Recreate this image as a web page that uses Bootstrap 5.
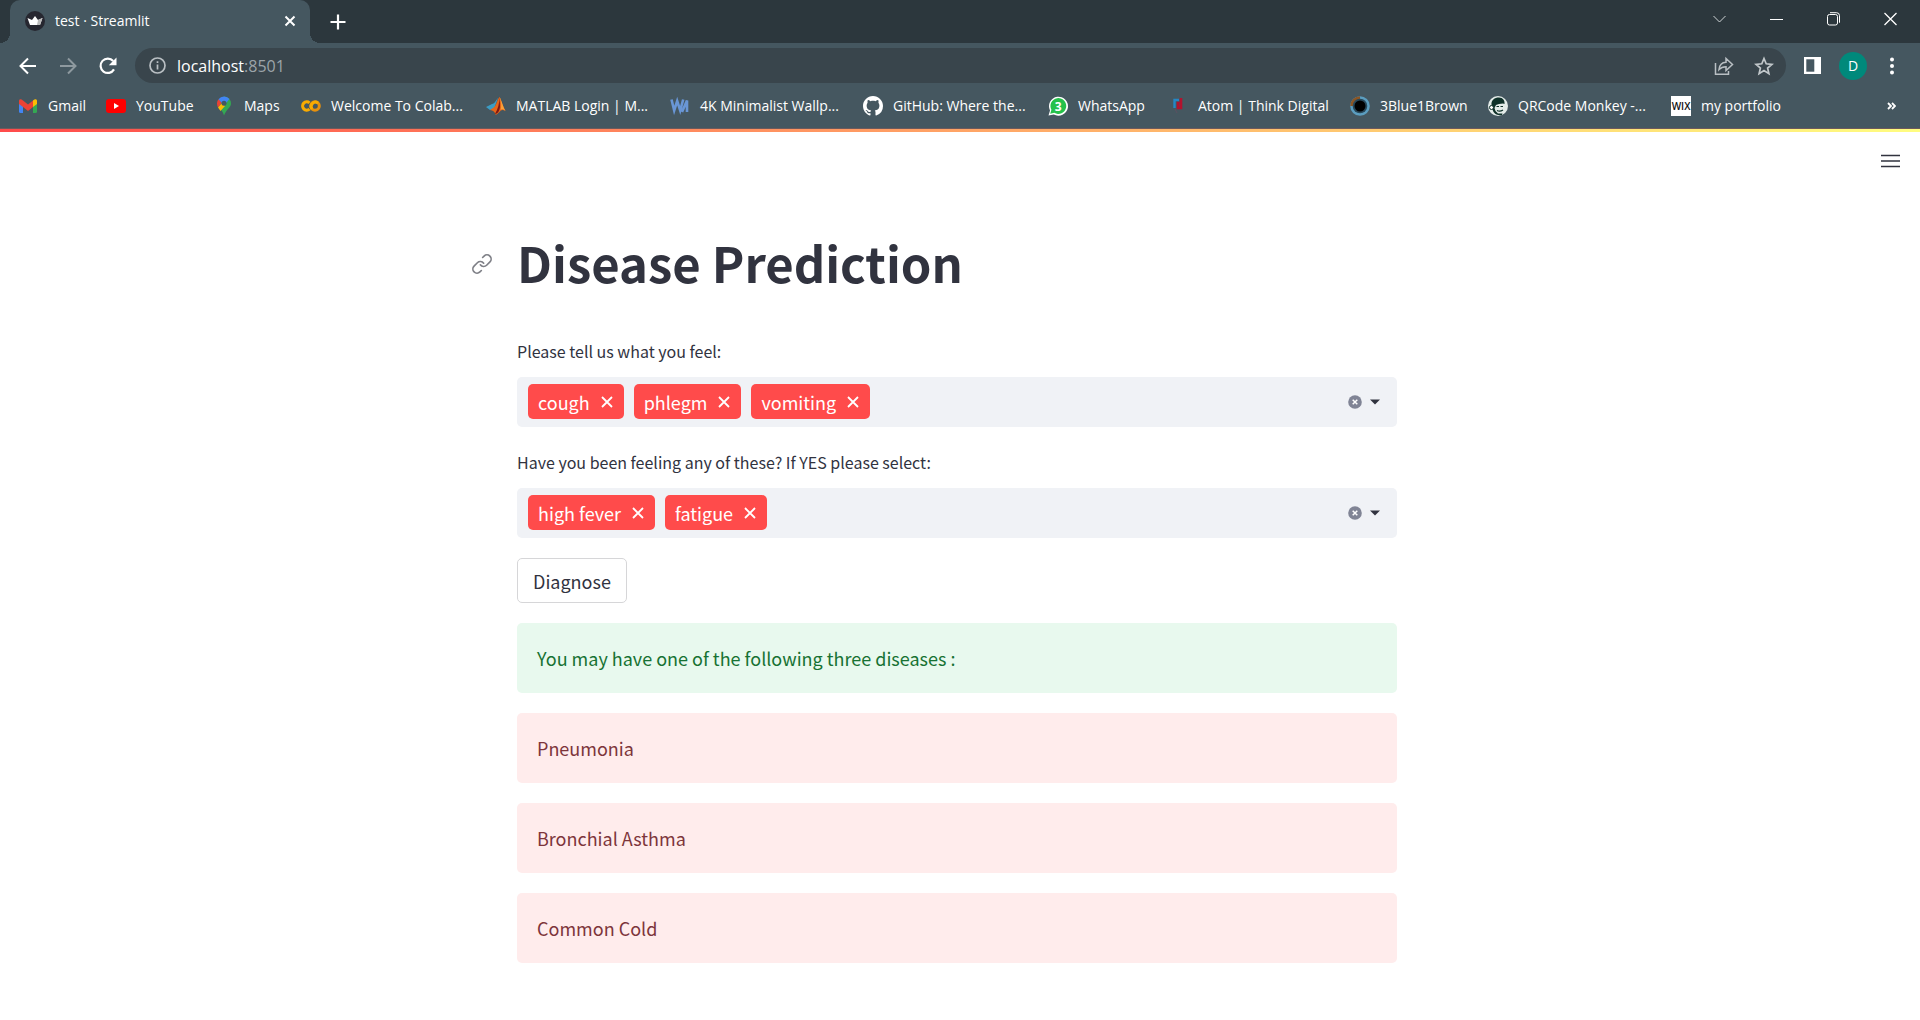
<!DOCTYPE html>
<html lang="en">
<head>
<meta charset="utf-8">
<meta name="viewport" content="width=device-width, initial-scale=1">
<title>test · Streamlit</title>
<link href="https://cdn.jsdelivr.net/npm/bootstrap@5.3.0/dist/css/bootstrap.min.css" rel="stylesheet">
<style>
  :root { --strip:#2c373d; --bar:#455760; --omni:#39454c; --ink:#31333f; }
  body { font-family:"Noto Sans CJK JP","Source Sans Pro",sans-serif; font-size:18px; line-height:30px; color:var(--ink); background:#fff; }
  button { font:inherit; color:inherit; background:none; border:0; padding:0; }
  svg { display:block; flex:none; }
  .chrome-ui { font-family:"Open Sans","Segoe UI",sans-serif; font-size:14px; line-height:20px; color:#fff; background:var(--bar); }
  .tab-strip { height:43px; background:var(--strip); padding-left:10px; }
  .browser-tab { width:300px; height:43px; background:var(--bar); border-radius:10px 10px 0 0; padding:0 14px 2px 15px; gap:10px; }
  .browser-tab::before, .browser-tab::after { content:""; position:absolute; bottom:0; width:10px; height:10px; }
  .browser-tab::before { left:-10px; background:radial-gradient(circle at 0 0, transparent 10px, var(--bar) 10px); }
  .browser-tab::after { right:-10px; background:radial-gradient(circle at 100% 0, transparent 10px, var(--bar) 10px); }
  .new-tab { margin-left:20px; }
  .win-controls { gap:42px; padding-right:22px; padding-bottom:6px; }
  .tool-row { height:45px; padding:0 24px 0 18px; }
  .nav-buttons { gap:20px; margin-right:17px; }
  .omnibox { height:35px; border-radius:18px; background:var(--omni); padding:0 12px 0 14px; }
  .omnibox a { font-size:16px; color:#fff; margin-left:11px; }
  .omnibox a span { color:#9ca4a9; }
  .tool-right { gap:17px; margin-left:17px; }
  .avatar { width:28px; height:28px; background:#00897b; }
  .bookmark-row { height:40px; padding:0 24px 4px 18px; }
  .bookmark-grid { grid-template-columns:88px 108px 87px 185px 184px 193px 185px 120px 182px 138px 183px auto; }
  .bookmark-grid a { gap:10px; color:#fff; }
  .accent-line { height:4px; border-top:1px solid #6d5a5c; background:linear-gradient(90deg,#ff4b4b,#fffd80); }
  .menu-row { height:54px; padding:3px 20px 0 0; }
  .app-col { max-width:880px; width:100%; }
  .app-main { padding-right:6px; }
  .app-title { font-size:49px; line-height:66px; font-weight:700; margin:43px 0 44px; }
  .title-anchor { left:-45px; top:25px; }
  .field-label { font-size:16px; line-height:24px; margin-bottom:14px; display:block; }
  .multi-box { background:#f0f2f6; border-radius:5px; padding:7px 16px 8px 11px; gap:10px; margin-bottom:23px; }
  .multi-box input { background:transparent; border:0; outline:0; min-width:0; }
  .box-tools { gap:7px; }
  .chip { background:#ff4b4b; color:#fff; height:35px; border-radius:5px; padding:0 11px 0 10px; gap:11px; }
  .diagnose { border:1px solid #d6d6d8; border-radius:5px; height:45px; padding:0 15px; background:#fff; }
  .result { border-radius:5px; padding:20px; margin:20px 0 0; border:0; }
  .result-ok { background:#e8f9ee; color:#177233; }
  .result-bad { background:#ffecec; color:#7d353b; }
</style>
<script src="https://cdn.jsdelivr.net/npm/bootstrap@5.3.0/dist/js/bootstrap.bundle.min.js"></script>
</head>
<body>
<header class="chrome-ui">
  <div class="tab-strip d-flex align-items-center">
    <div class="browser-tab position-relative d-flex align-items-center">
      <svg width="20" height="20" viewBox="0 0 20 20"><circle cx="10" cy="10" r="10" fill="#262730"/><path d="M2.500 7l4.500 2 3-4 3 4 4.500-2-2.500 7H5z" fill="#fff"/><path d="M13 9l4.500-2-2.500 7h-3z" fill="#bbb"/></svg>
      <span class="me-auto">test · Streamlit</span>
      <button aria-label="Close tab"><svg width="12" height="12" viewBox="0 0 12 12" stroke="#fff" stroke-width="2"><path d="M1.500 1.500l9 9M10.500 1.500l-9 9"/></svg></button>
    </div>
    <button class="new-tab" aria-label="New tab"><svg width="16" height="16" viewBox="0 0 16 16" stroke="#fff" stroke-width="2.200"><path d="M8 .5v15M.5 8h15"/></svg></button>
    <div class="win-controls d-flex align-items-center ms-auto">
      <button aria-label="Search tabs"><svg width="15" height="14" viewBox="0 0 15 14" fill="none" stroke="#cfd4d6"><path d="M1.500 4l6 6 6-6"/></svg></button>
      <button aria-label="Minimize"><svg width="15" height="14" viewBox="0 0 15 14" stroke="#fff"><path d="M1 7.500h13"/></svg></button>
      <button aria-label="Restore"><svg width="15" height="14" viewBox="0 0 15 14" fill="none" stroke="#fff"><rect x="1.500" y="2.500" width="10" height="10.500" rx="2"/><path d="M4 .7h6.500a3 3 0 0 1 3 3v7"/></svg></button>
      <button aria-label="Close"><svg width="15" height="14" viewBox="0 0 15 14" stroke="#fff" stroke-width="1.300"><path d="M1.500 1l12 12M13.500 1l-12 12"/></svg></button>
    </div>
  </div>
  <div class="tool-row d-flex align-items-center">
    <div class="nav-buttons d-flex align-items-center">
      <button aria-label="Back"><svg width="20" height="20" viewBox="0 0 20 20" fill="none" stroke="#fff" stroke-width="2"><path d="M18 10H3M10 2.500L2.500 10l7.500 7.500"/></svg></button>
      <button aria-label="Forward"><svg width="20" height="20" viewBox="0 0 20 20" fill="none" stroke="#8e999f" stroke-width="2"><path d="M2 10h15M10 2.500l7.500 7.500-7.500 7.500"/></svg></button>
      <button aria-label="Reload"><svg width="20" height="20" viewBox="0 0 20 20"><path d="M16 13.400A7.200 7.200 0 1 1 15.200 5" fill="none" stroke="#fff" stroke-width="2.200"/><path d="M18.500 1.500v7.700h-7.700z" fill="#fff"/></svg></button>
    </div>
    <div class="omnibox d-flex align-items-center flex-grow-1">
      <svg width="17" height="17" viewBox="0 0 17 17" fill="none" stroke="#b9bfc3" stroke-width="1.700"><circle cx="8.500" cy="8.500" r="7.500"/><path d="M8.500 7.500v5M8.500 4.300v1.800"/></svg>
      <a href="#" class="text-decoration-none me-auto">localhost<span>:8501</span></a>
      <button class="me-3 pe-1" aria-label="Share"><svg width="20" height="20" viewBox="0 0 20 20" fill="none" stroke="#b9bfc3" stroke-width="1.500"><path d="M1.500 7v11.200h13V15M5 13.500c.5-5 3-7 7-7.200V2.500l6.500 6-6.500 6v-3.800c-3 0-5 .6-7 2.800z"/></svg></button>
      <button aria-label="Bookmark this page"><svg width="20" height="20" viewBox="0 0 20 20" fill="none" stroke="#c2c8cb" stroke-width="1.700"><path d="M10 2.500l2.200 5.300 5.700.5-4.300 3.700 1.300 5.600-4.900-3-4.900 3L6.400 12 2.100 8.300l5.700-.5z"/></svg></button>
    </div>
    <div class="tool-right d-flex align-items-center">
      <button aria-label="Side panel"><svg width="19" height="19" viewBox="0 0 19 19"><path d="M1 1h17v17H1z" fill="#fff"/><path d="M3.300 3.300h8v12.400h-8z" fill="#455760"/></svg></button>
      <button class="avatar rounded-circle">D</button>
      <button class="ps-1" aria-label="Browser menu"><svg width="8" height="18" viewBox="0 0 8 18" fill="#fff"><circle cx="4" cy="2.500" r="2"/><circle cx="4" cy="9" r="2"/><circle cx="4" cy="15.500" r="2"/></svg></button>
    </div>
  </div>
  <nav class="bookmark-row d-flex align-items-center" aria-label="Bookmarks">
    <div class="bookmark-grid d-grid text-nowrap">
      <a href="#" class="d-flex align-items-center text-decoration-none"><svg width="20" height="20" viewBox="0 0 20 20"><path d="M1 6h4v11H2.500A1.500 1.500 0 0 1 1 15.500z" fill="#4285f4"/><path d="M15 6h4v9.500a1.500 1.500 0 0 1-1.500 1.500H15z" fill="#34a853"/><path d="M15 4.500c2-2 4-1.500 4 .5v3l-4 3z" fill="#fbbc04"/><path d="M5 4.500l5 4 5-4V11l-5 4-5-4-4-3V5c0-2 2-2.500 4-.5z" fill="#ea4335"/></svg>Gmail</a>
      <a href="#" class="d-flex align-items-center text-decoration-none"><svg width="20" height="20" viewBox="0 0 20 20"><rect y="3" width="20" height="14" rx="3" fill="#f00"/><path d="M8 7l5 3-5 3z" fill="#fff"/></svg>YouTube</a>
      <a href="#" class="d-flex align-items-center text-decoration-none"><svg width="20" height="20" viewBox="0 0 20 20"><path d="M10 .5a7 7 0 0 1 7 7c0 4-5 6-7 12-1-4-3-5.500-5-8z" fill="#34a853"/><path d="M4.500 3.200L8 6.500l-4 5C2.500 8.500 2.700 5 4.500 3.200z" fill="#ea4335"/><path d="M4.500 3.200A7 7 0 0 1 15.500 3L10 9.500z" fill="#4285f4"/><path d="M4 11.500l4-4.500 3 3-4.500 5z" fill="#fbbc04"/><circle cx="10" cy="7.300" r="2.500" fill="#455760"/></svg>Maps</a>
      <a href="#" class="d-flex align-items-center text-decoration-none"><svg width="20" height="20" viewBox="0 0 20 20" fill="none" stroke-width="3"><path d="M8.500 6.800a4.200 4.200 0 1 0 0 6.400" stroke="#f9ab00"/><circle cx="14" cy="10" r="4.300" stroke="#e8910c"/><path d="M17 7a4.300 4.300 0 0 0-6 6" stroke="#f9ab00"/></svg>Welcome To Colab...</a>
      <a href="#" class="d-flex align-items-center text-decoration-none"><svg width="20" height="20" viewBox="0 0 20 20"><path d="M0 11l6-3c3-.5 4-4 6-6l-4 11-4 1z" fill="#3c9cc4"/><path d="M4 14l3-2c3-1 4-8 6.500-11 2 3 3.500 10 6 14-3-2-4.500-1-6 1-2 2-3.500 3-4 2.500-1-3-2.500-4-5.500-4.500z" fill="#e5661a"/><path d="M13.500 1c0 6-1.500 12-4.500 17 3 0 5-4 5-8z" fill="#7e1712"/><path d="M13.500 1c2 5 2 10 1 13 1-1 3-1 5 1-2.500-4-4-11-6-14z" fill="#f8a13a"/></svg>MATLAB Login | M...</a>
      <a href="#" class="d-flex align-items-center text-decoration-none"><svg width="20" height="20" viewBox="0 0 20 20" fill="none" stroke="#6996d6" stroke-width="2.600"><path d="M1.500 3.500l2.700 11 3-9.500 3 9.500 3-11M12 16l5-11.500V16"/></svg>4K Minimalist Wallp...</a>
      <a href="#" class="d-flex align-items-center text-decoration-none"><svg width="20" height="20" viewBox="0 0 16 16" fill="#fff"><path d="M8 0C3.580 0 0 3.580 0 8c0 3.540 2.290 6.530 5.470 7.590.4.070.55-.17.55-.38 0-.19-.01-.82-.01-1.490-2.010.37-2.530-.49-2.690-.94-.09-.23-.48-.94-.82-1.130-.28-.15-.68-.52-.01-.53.63-.01 1.080.58 1.230.82.72 1.210 1.870.87 2.330.66.07-.52.28-.87.51-1.070-1.780-.2-3.640-.89-3.640-3.950 0-.87.31-1.590.82-2.150-.08-.2-.36-1.020.08-2.120 0 0 .67-.21 2.200.82.64-.18 1.320-.27 2-.27s1.360.09 2 .27c1.530-1.040 2.200-.82 2.200-.82.44 1.100.16 1.920.08 2.120.51.56.82 1.270.82 2.150 0 3.070-1.870 3.750-3.650 3.950.29.25.54.73.54 1.480 0 1.070-.01 1.930-.01 2.200 0 .21.15.46.55.38A8.010 8.010 0 0 0 16 8c0-4.420-3.580-8-8-8z"/></svg>GitHub: Where the...</a>
      <a href="#" class="d-flex align-items-center text-decoration-none"><svg width="20" height="20" viewBox="0 0 20 20"><path d="M.5 19.500L2 14.500A9.500 9.500 0 1 1 5.800 18.500z" fill="#fff"/><path d="M2.200 17.800l1.200-4A7.900 7.900 0 1 1 6.300 16.800z" fill="#25c14b"/><text x="10.300" y="14.500" text-anchor="middle" font-size="12" font-weight="700" fill="#fff">3</text></svg>WhatsApp</a>
      <a href="#" class="d-flex align-items-center text-decoration-none"><svg width="20" height="20" viewBox="0 0 20 20" fill="none"><path d="M6.500 12V4h4.500" stroke="#2487c4" stroke-width="2.400"/><path d="M13 2v10h-3V7h1.500" stroke="#b3122e" stroke-width="2.600"/><path d="M7 13l2 4" stroke="#5d5060" stroke-width="1"/></svg>Atom | Think Digital</a>
      <a href="#" class="d-flex align-items-center text-decoration-none"><svg width="20" height="20" viewBox="0 0 20 20"><circle cx="10" cy="10" r="9.800" fill="#5b9dbf"/><path d="M10 10V.2A9.800 9.800 0 0 0 .2 10z" fill="#8b5524"/><circle cx="10" cy="10" r="7.300" fill="#28485a"/><circle cx="10" cy="10" r="5.500" fill="#000"/></svg>3Blue1Brown</a>
      <a href="#" class="d-flex align-items-center text-decoration-none"><svg width="20" height="20" viewBox="0 0 20 20"><circle cx="10" cy="10" r="10" fill="#e3ebe8"/><path d="M3.500 9C3 4 6.500 1.500 11 1.500c4 0 6 3 5.500 6.500l-1.500-.5-4 .5-3 1-1.500 3 1 3 2.500 2.500 4.500 0-.5 1.500c-5 1-9-2-9.500-6z" fill="#0f3129"/><circle cx="3.500" cy="11.500" r="2" fill="#fff" stroke="#0f3129"/><path d="M8.500 10.500H11M12.500 10.500H15M9 14.500c2 1 4 .8 6-.5" stroke="#0f3129" stroke-width="1.200" fill="none"/></svg>QRCode Monkey -...</a>
      <a href="#" class="d-flex align-items-center text-decoration-none"><svg width="20" height="20" viewBox="0 0 20 20"><path d="M0 0h20v20H0z" fill="#fff"/><text x="10" y="13.500" text-anchor="middle" font-size="10" font-weight="600" fill="#111">WIX</text></svg>my portfolio</a>
    </div>
    <button class="ms-auto" aria-label="More bookmarks"><svg width="9" height="8" viewBox="0 0 9 8" fill="none" stroke="#fff" stroke-width="1.800"><path d="M1 1l3 3-3 3M5 1l3 3-3 3"/></svg></button>
  </nav>
</header>
<div class="accent-line"></div>
<div class="menu-row d-flex align-items-center justify-content-end">
  <button aria-label="App menu"><svg width="19" height="14" viewBox="0 0 19 14" stroke="#31333f" stroke-width="1.700"><path d="M0 1.500h19M0 7h19M0 12.500h19"/></svg></button>
</div>
<main class="app-main d-flex justify-content-center">
  <div class="app-col">
    <h1 class="app-title position-relative">
      <a href="#" class="title-anchor position-absolute" aria-label="Link to this heading"><svg width="20" height="20" viewBox="0 0 24 24" fill="none" stroke="#7f8087" stroke-width="2" stroke-linecap="round" stroke-linejoin="round"><path d="M10 13a5 5 0 0 0 7.540.54l4-4a5 5 0 0 0-7.070-7.070l-1.720 1.710"/><path d="M14 11a5 5 0 0 0-7.540-.54l-4 4a5 5 0 0 0 7.070 7.070l1.710-1.710"/></svg></a>Disease Prediction</h1>
    <label class="field-label" for="feel">Please tell us what you feel:</label>
    <div class="multi-box d-flex align-items-center">
      <button class="chip d-flex align-items-center">cough<svg width="12" height="12" viewBox="0 0 12 12" stroke="#fff" stroke-width="1.800"><path d="M1 1l10 10M11 1L1 11"/></svg></button>
      <button class="chip d-flex align-items-center">phlegm<svg width="12" height="12" viewBox="0 0 12 12" stroke="#fff" stroke-width="1.800"><path d="M1 1l10 10M11 1L1 11"/></svg></button>
      <button class="chip d-flex align-items-center">vomiting<svg width="12" height="12" viewBox="0 0 12 12" stroke="#fff" stroke-width="1.800"><path d="M1 1l10 10M11 1L1 11"/></svg></button>
      <input id="feel" type="text" class="flex-grow-1">
      <div class="box-tools d-flex align-items-center">
        <button aria-label="Clear all"><svg width="14" height="14" viewBox="0 0 14 14"><circle cx="7" cy="7" r="6.800" fill="#808495"/><path d="M4.700 4.700l4.600 4.600M9.300 4.700L4.700 9.300" stroke="#fff" stroke-width="1.500"/></svg></button>
        <button aria-label="Open"><svg width="12" height="6" viewBox="0 0 12 6"><path d="M1 .5h10L6 5.500z" fill="#31333f"/></svg></button>
      </div>
    </div>
    <label class="field-label" for="also">Have you been feeling any of these? If YES please select:</label>
    <div class="multi-box d-flex align-items-center mb-0">
      <button class="chip d-flex align-items-center">high fever<svg width="12" height="12" viewBox="0 0 12 12" stroke="#fff" stroke-width="1.800"><path d="M1 1l10 10M11 1L1 11"/></svg></button>
      <button class="chip d-flex align-items-center">fatigue<svg width="12" height="12" viewBox="0 0 12 12" stroke="#fff" stroke-width="1.800"><path d="M1 1l10 10M11 1L1 11"/></svg></button>
      <input id="also" type="text" class="flex-grow-1">
      <div class="box-tools d-flex align-items-center">
        <button aria-label="Clear all"><svg width="14" height="14" viewBox="0 0 14 14"><circle cx="7" cy="7" r="6.800" fill="#808495"/><path d="M4.700 4.700l4.600 4.600M9.300 4.700L4.700 9.300" stroke="#fff" stroke-width="1.500"/></svg></button>
        <button aria-label="Open"><svg width="12" height="6" viewBox="0 0 12 6"><path d="M1 .5h10L6 5.500z" fill="#31333f"/></svg></button>
      </div>
    </div>
    <div class="d-flex mt-3 pt-1"><button class="diagnose">Diagnose</button></div>
    <div class="alert result result-ok">You may have one of the following three diseases :</div>
    <div class="alert result result-bad">Pneumonia</div>
    <div class="alert result result-bad">Bronchial Asthma</div>
    <div class="alert result result-bad">Common Cold</div>
  </div>
</main>
</body>
</html>
